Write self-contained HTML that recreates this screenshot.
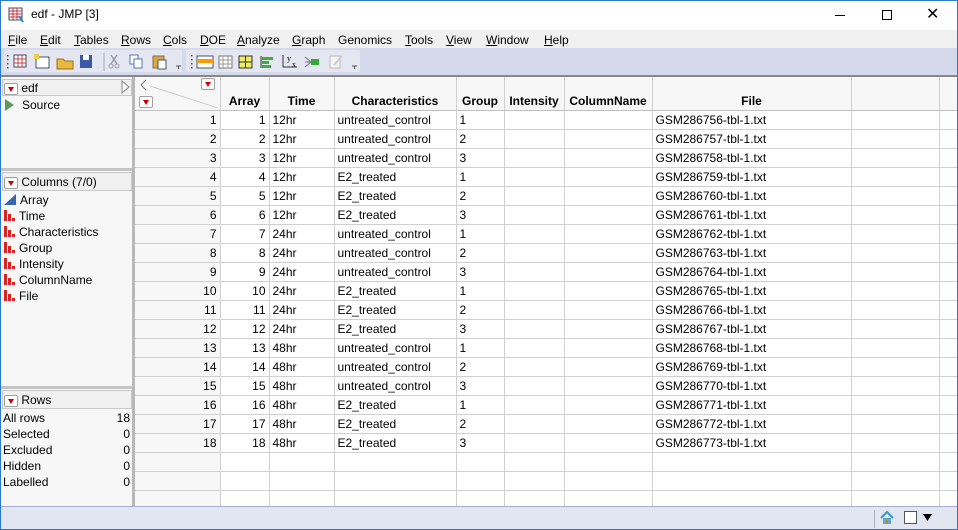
<!DOCTYPE html>
<html><head><meta charset="utf-8"><style>
*{box-sizing:border-box;margin:0;padding:0}
body{width:958px;height:530px;overflow:hidden;font-family:"Liberation Sans",sans-serif;font-size:12px;color:#000;background:#fff;position:relative}
.abs{position:absolute}
#win{position:absolute;left:0;top:0;width:958px;height:530px;border:1px solid #2b79d0}
.menu span{margin-right:0}
.tri{display:inline-block;width:14px;height:12px;border:1px solid #a0a0a0;border-radius:2px;background:#fff;position:relative;vertical-align:middle}
.tri:after{content:"";position:absolute;left:3px;top:3px;border-left:3.5px solid transparent;border-right:3.5px solid transparent;border-top:5px solid #c00}
.bar{display:inline-block;width:11px;height:11px;position:relative;vertical-align:-1px;margin-right:4px}
.bar i{position:absolute;bottom:0;background:#d22}
table{border-collapse:collapse;table-layout:fixed}
td{height:19px;border-right:1px solid #d0d0d0;border-bottom:1px solid #d0d0d0;padding:0 3px;white-space:nowrap;overflow:hidden;font-size:12px}
td.n{background:#f7f7f7;text-align:right}
td.r{text-align:right}
.side div{height:16px;line-height:16px}
</style></head><body>
<div id="win"></div>
<!-- title -->
<div class="abs" style="left:8px;top:7px;width:16px;height:16px">
<svg width="16" height="16"><rect x="1" y="1" width="13" height="12" fill="#fff" stroke="#446"/><path d="M1 4h13M1 7h13M1 10h13M5 1v12M9 1v12" stroke="#c33" stroke-width="1"/><path d="M11 9l4 6" stroke="#28c" stroke-width="2"/></svg></div>
<div class="abs" style="left:31px;top:7px;font-size:12px">edf - JMP [3]</div>
<div class="abs" style="left:835px;top:15px;width:10px;height:1px;background:#000"></div>
<div class="abs" style="left:882px;top:10px;width:10px;height:10px;border:1px solid #000"></div>
<div class="abs" style="left:926px;top:7px;font-size:16px;line-height:16px">✕</div>
<!-- menu -->
<div class="abs" style="left:1px;top:30px;width:956px;height:18px;background:#f0f0f0"></div>
<div class="abs menu" style="left:8px;top:33px;font-size:12px;word-spacing:0">
<span style="position:absolute;left:0"><u>F</u>ile</span>
<span style="position:absolute;left:32px"><u>E</u>dit</span>
<span style="position:absolute;left:66px"><u>T</u>ables</span>
<span style="position:absolute;left:113px"><u>R</u>ows</span>
<span style="position:absolute;left:155px"><u>C</u>ols</span>
<span style="position:absolute;left:192px"><u>D</u>OE</span>
<span style="position:absolute;left:229px"><u>A</u>nalyze</span>
<span style="position:absolute;left:284px"><u>G</u>raph</span>
<span style="position:absolute;left:330px">Genomics</span>
<span style="position:absolute;left:397px"><u>T</u>ools</span>
<span style="position:absolute;left:438px"><u>V</u>iew</span>
<span style="position:absolute;left:478px"><u>W</u>indow</span>
<span style="position:absolute;left:536px"><u>H</u>elp</span>
</div>
<!-- toolbar -->
<div class="abs" style="left:1px;top:48px;width:956px;height:27px;background:#d4d9ec"></div>
<div class="abs" style="left:4px;top:50px;width:178px;height:22px;background:#e4e7f2;border-radius:2px"></div>
<div class="abs" style="left:186px;top:50px;width:174px;height:22px;background:#e4e7f2;border-radius:2px"></div>
<svg class="abs" style="left:4px;top:52px" width="360" height="20">
<g fill="#555"><rect x="3" y="3" width="1.5" height="1.5"/><rect x="3" y="7" width="1.5" height="1.5"/><rect x="3" y="11" width="1.5" height="1.5"/><rect x="3" y="15" width="1.5" height="1.5"/>
<rect x="187" y="3" width="1.5" height="1.5"/><rect x="187" y="7" width="1.5" height="1.5"/><rect x="187" y="11" width="1.5" height="1.5"/><rect x="187" y="15" width="1.5" height="1.5"/></g>
<rect x="10" y="3" width="12" height="12" fill="#fff" stroke="#446"/><path d="M10 7h12M10 11h12M14 3v12M18 3v12" stroke="#c44"/>
<rect x="32" y="5" width="13" height="11" fill="#fff" stroke="#456"/><rect x="30" y="2" width="5" height="5" fill="#ec4"/>
<path d="M53 7h6l2 2h8v8h-16z" fill="#e8b840" stroke="#a07010"/>
<rect x="76" y="3" width="12" height="13" fill="#3a5aa8"/><rect x="79" y="3" width="6" height="5" fill="#fff"/>
<line x1="100" y1="1" x2="100" y2="19" stroke="#aab"/>
<path d="M107 3l6 9M113 3l-6 9" stroke="#99a" stroke-width="1.5"/><circle cx="107" cy="14" r="2" fill="none" stroke="#99a"/><circle cx="113" cy="14" r="2" fill="none" stroke="#99a"/>
<rect x="126" y="3" width="8" height="9" fill="#fff" stroke="#57a"/><rect x="130" y="7" width="8" height="9" fill="#fff" stroke="#57a"/>
<rect x="149" y="4" width="11" height="12" fill="#d9a842" stroke="#865"/><rect x="154" y="8" width="8" height="9" fill="#fff" stroke="#555"/>
<path d="M172 14h5M174.5 14v3" stroke="#555"/>
<rect x="193" y="4" width="16" height="12" fill="#fff" stroke="#456"/><rect x="193" y="7" width="16" height="4" fill="#f90"/>
<rect x="215" y="4" width="13" height="12" fill="#fff" stroke="#777"/><path d="M215 8h13M215 12h13M219 4v12M224 4v12" stroke="#999"/>
<rect x="235" y="4" width="13" height="12" fill="#ee6" stroke="#333"/><path d="M235 10h13M241.5 4v12" stroke="#333"/>
<path d="M257 4v12" stroke="#333"/><rect x="258" y="5" width="11" height="3" fill="#4a4"/><rect x="258" y="9" width="7" height="3" fill="#4a4"/><rect x="258" y="13" width="9" height="3" fill="#4a4"/>
<path d="M279 3v12h14" stroke="#333" fill="none"/><text x="283" y="9" font-size="8" font-family="Liberation Serif">y</text><text x="288" y="15" font-size="8" font-family="Liberation Serif">x</text>
<path d="M301 5l6 5-6 5M301 10h6" stroke="#778" fill="none"/><rect x="307" y="7" width="8" height="6" fill="#3a3"/>
<rect x="326" y="4" width="10" height="12" fill="#f4f4f4" stroke="#bbb"/><path d="M330 13l8-9" stroke="#ccc" stroke-width="2"/>
<path d="M348 14h5M350.5 14v3" stroke="#555"/>
</svg>
<div class="abs" style="left:1px;top:75px;width:956px;height:2px;background:#888"></div>
<!-- left panel -->
<div class="abs" style="left:1px;top:77px;width:131px;height:430px;background:#f7f7f7"></div>
<div class="abs" style="left:132px;top:77px;width:3px;height:430px;background:#b8b8b8"></div>
<div class="abs" style="left:1px;top:168px;width:131px;height:3px;background:#c4c4c4"></div>
<div class="abs" style="left:1px;top:386px;width:131px;height:3px;background:#c4c4c4"></div>
<div class="abs" style="left:2px;top:79px;width:130px;height:17px;background:#f0f0f0;border:1px solid #c8c8c8"></div>
<div class="abs" style="left:4px;top:81px"><span class="tri"></span> edf</div>
<svg class="abs" style="left:121px;top:80px" width="10" height="14"><path d="M1 1l7 6-7 6z" fill="#fff" stroke="#888"/></svg>
<svg class="abs" style="left:5px;top:99px" width="10" height="12"><path d="M0 0l9 6-9 6z" fill="#5a9a5a"/></svg>
<div class="abs" style="left:22px;top:98px">Source</div>
<div class="abs" style="left:2px;top:172px;width:130px;height:19px;background:#f0f0f0;border:1px solid #c8c8c8"></div>
<div class="abs" style="left:4px;top:175px"><span class="tri"></span> Columns (7/0)</div>
<div class="abs side" style="left:4px;top:192px">
<div><svg width="12" height="11" style="vertical-align:-1px;margin-right:4px"><path d="M0 11L12 0v11z" fill="#3a64b0"/></svg>Array</div>
<div><span class="bar"><i style="left:0;width:3px;height:11px"></i><i style="left:4px;width:3px;height:7px"></i><i style="left:8px;width:3px;height:3px"></i></span>Time</div>
<div><span class="bar"><i style="left:0;width:3px;height:11px"></i><i style="left:4px;width:3px;height:7px"></i><i style="left:8px;width:3px;height:3px"></i></span>Characteristics</div>
<div><span class="bar"><i style="left:0;width:3px;height:11px"></i><i style="left:4px;width:3px;height:7px"></i><i style="left:8px;width:3px;height:3px"></i></span>Group</div>
<div><span class="bar"><i style="left:0;width:3px;height:11px"></i><i style="left:4px;width:3px;height:7px"></i><i style="left:8px;width:3px;height:3px"></i></span>Intensity</div>
<div><span class="bar"><i style="left:0;width:3px;height:11px"></i><i style="left:4px;width:3px;height:7px"></i><i style="left:8px;width:3px;height:3px"></i></span>ColumnName</div>
<div><span class="bar"><i style="left:0;width:3px;height:11px"></i><i style="left:4px;width:3px;height:7px"></i><i style="left:8px;width:3px;height:3px"></i></span>File</div>
</div>
<div class="abs" style="left:2px;top:390px;width:130px;height:19px;background:#f0f0f0;border:1px solid #c8c8c8"></div>
<div class="abs" style="left:4px;top:393px"><span class="tri"></span> Rows</div>
<div class="abs side" style="left:3px;top:410px;width:127px">
<div>All rows<span style="float:right">18</span></div>
<div>Selected<span style="float:right">0</span></div>
<div>Excluded<span style="float:right">0</span></div>
<div>Hidden<span style="float:right">0</span></div>
<div>Labelled<span style="float:right">0</span></div>
</div>
<!-- grid -->
<div class="abs" style="left:135px;top:77px;width:822px;height:430px;overflow:hidden">
<table style="width:823px">
<colgroup><col style="width:85px"><col style="width:49px"><col style="width:65px"><col style="width:122px"><col style="width:48px"><col style="width:60px"><col style="width:88px"><col style="width:199px"><col style="width:88px"><col style="width:19px"></colgroup>
<tr style="font-weight:bold;background:#f7f7f7">
<td style="height:33px;background:#f7f7f7;position:relative;border-bottom:1px solid #c0c0c0"><svg style="position:absolute;left:3px;top:1px" width="80" height="30"><path d="M8 2l-5 5 5 5" stroke="#777" fill="none"/><line x1="12" y1="8" x2="80" y2="30" stroke="#ccc"/></svg><span class="tri" style="position:absolute;left:66px;top:1px"></span><span class="tri" style="position:absolute;left:4px;top:19px"></span></td>
<td style="text-align:center;vertical-align:bottom;padding-bottom:2px;border-bottom:1px solid #c0c0c0">Array</td>
<td style="text-align:center;vertical-align:bottom;padding-bottom:2px;border-bottom:1px solid #c0c0c0">Time</td>
<td style="text-align:center;vertical-align:bottom;padding-bottom:2px;border-bottom:1px solid #c0c0c0">Characteristics</td>
<td style="text-align:center;vertical-align:bottom;padding-bottom:2px;border-bottom:1px solid #c0c0c0">Group</td>
<td style="text-align:center;vertical-align:bottom;padding-bottom:2px;border-bottom:1px solid #c0c0c0">Intensity</td>
<td style="text-align:center;vertical-align:bottom;padding-bottom:2px;border-bottom:1px solid #c0c0c0">ColumnName</td>
<td style="text-align:center;vertical-align:bottom;padding-bottom:2px;border-bottom:1px solid #c0c0c0">File</td>
<td style="border-bottom:1px solid #c0c0c0"></td><td style="border-bottom:1px solid #c0c0c0"></td></tr>
<tr><td class="n">1</td><td class="r">1</td><td>12hr</td><td>untreated_control</td><td>1</td><td></td><td></td><td>GSM286756-tbl-1.txt</td><td></td><td></td></tr>
<tr><td class="n">2</td><td class="r">2</td><td>12hr</td><td>untreated_control</td><td>2</td><td></td><td></td><td>GSM286757-tbl-1.txt</td><td></td><td></td></tr>
<tr><td class="n">3</td><td class="r">3</td><td>12hr</td><td>untreated_control</td><td>3</td><td></td><td></td><td>GSM286758-tbl-1.txt</td><td></td><td></td></tr>
<tr><td class="n">4</td><td class="r">4</td><td>12hr</td><td>E2_treated</td><td>1</td><td></td><td></td><td>GSM286759-tbl-1.txt</td><td></td><td></td></tr>
<tr><td class="n">5</td><td class="r">5</td><td>12hr</td><td>E2_treated</td><td>2</td><td></td><td></td><td>GSM286760-tbl-1.txt</td><td></td><td></td></tr>
<tr><td class="n">6</td><td class="r">6</td><td>12hr</td><td>E2_treated</td><td>3</td><td></td><td></td><td>GSM286761-tbl-1.txt</td><td></td><td></td></tr>
<tr><td class="n">7</td><td class="r">7</td><td>24hr</td><td>untreated_control</td><td>1</td><td></td><td></td><td>GSM286762-tbl-1.txt</td><td></td><td></td></tr>
<tr><td class="n">8</td><td class="r">8</td><td>24hr</td><td>untreated_control</td><td>2</td><td></td><td></td><td>GSM286763-tbl-1.txt</td><td></td><td></td></tr>
<tr><td class="n">9</td><td class="r">9</td><td>24hr</td><td>untreated_control</td><td>3</td><td></td><td></td><td>GSM286764-tbl-1.txt</td><td></td><td></td></tr>
<tr><td class="n">10</td><td class="r">10</td><td>24hr</td><td>E2_treated</td><td>1</td><td></td><td></td><td>GSM286765-tbl-1.txt</td><td></td><td></td></tr>
<tr><td class="n">11</td><td class="r">11</td><td>24hr</td><td>E2_treated</td><td>2</td><td></td><td></td><td>GSM286766-tbl-1.txt</td><td></td><td></td></tr>
<tr><td class="n">12</td><td class="r">12</td><td>24hr</td><td>E2_treated</td><td>3</td><td></td><td></td><td>GSM286767-tbl-1.txt</td><td></td><td></td></tr>
<tr><td class="n">13</td><td class="r">13</td><td>48hr</td><td>untreated_control</td><td>1</td><td></td><td></td><td>GSM286768-tbl-1.txt</td><td></td><td></td></tr>
<tr><td class="n">14</td><td class="r">14</td><td>48hr</td><td>untreated_control</td><td>2</td><td></td><td></td><td>GSM286769-tbl-1.txt</td><td></td><td></td></tr>
<tr><td class="n">15</td><td class="r">15</td><td>48hr</td><td>untreated_control</td><td>3</td><td></td><td></td><td>GSM286770-tbl-1.txt</td><td></td><td></td></tr>
<tr><td class="n">16</td><td class="r">16</td><td>48hr</td><td>E2_treated</td><td>1</td><td></td><td></td><td>GSM286771-tbl-1.txt</td><td></td><td></td></tr>
<tr><td class="n">17</td><td class="r">17</td><td>48hr</td><td>E2_treated</td><td>2</td><td></td><td></td><td>GSM286772-tbl-1.txt</td><td></td><td></td></tr>
<tr><td class="n">18</td><td class="r">18</td><td>48hr</td><td>E2_treated</td><td>3</td><td></td><td></td><td>GSM286773-tbl-1.txt</td><td></td><td></td></tr>
<tr><td class="n"></td><td></td><td></td><td></td><td></td><td></td><td></td><td></td><td></td><td></td></tr>
<tr><td class="n"></td><td></td><td></td><td></td><td></td><td></td><td></td><td></td><td></td><td></td></tr>
<tr><td class="n" style="height:60px;vertical-align:top"></td><td></td><td></td><td></td><td></td><td></td><td></td><td></td><td></td><td></td></tr>
</table>
</div>
<!-- status bar -->
<div class="abs" style="left:1px;top:506px;width:956px;height:1px;background:#a8acd0"></div>
<div class="abs" style="left:1px;top:507px;width:956px;height:22px;background:#e1e6f0"></div>
<div class="abs" style="left:874px;top:510px;width:1px;height:18px;background:#aab"></div>
<svg class="abs" style="left:880px;top:511px" width="14" height="13"><path d="M1 7l6-6 6 6" fill="none" stroke="#39c" stroke-width="2"/><rect x="3" y="7" width="8" height="6" fill="#5ad"/><rect x="6" y="9" width="2" height="4" fill="#c80"/></svg>
<div class="abs" style="left:904px;top:511px;width:13px;height:13px;background:#fff;border:1px solid #555"></div>
<svg class="abs" style="left:923px;top:514px" width="9" height="7"><path d="M0 0h9l-4.5 7z" fill="#000"/></svg>
</body></html>
